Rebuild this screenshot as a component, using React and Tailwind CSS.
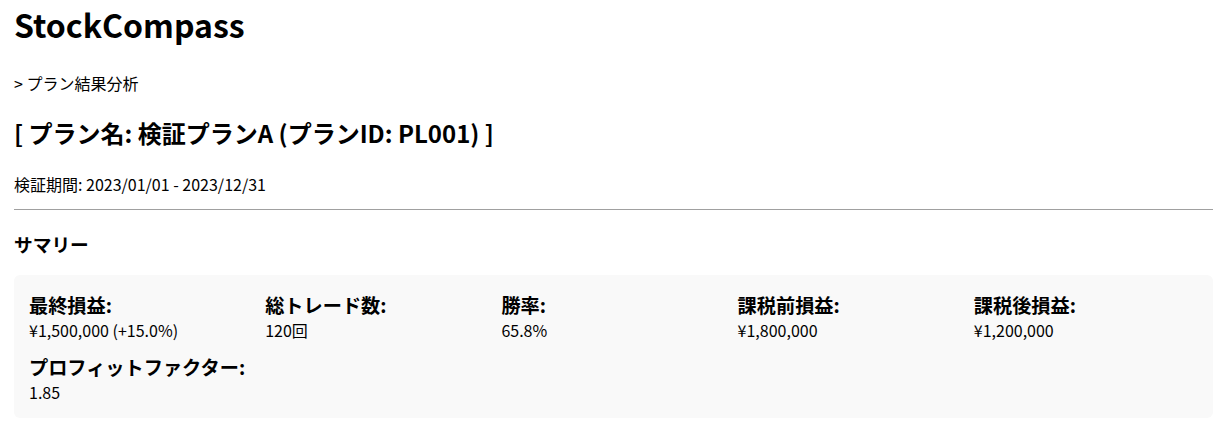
const summary = [
  { label: '最終損益:', value: '¥1,500,000 (+15.0%)' },
  { label: '総トレード数:', value: '120回' },
  { label: '勝率:', value: '65.8%' },
  { label: '課税前損益:', value: '¥1,800,000' },
  { label: '課税後損益:', value: '¥1,200,000' },
  { label: 'プロフィットファクター:', value: '1.85' },
];

export default function App() {
  return (
    <div
      className="min-h-screen bg-white pl-[14px] pr-[13px] text-black"
      style={{ fontFamily: '"Noto Sans CJK JP", "Noto Sans", sans-serif' }}
    >
      <h1 className="pt-[4px] text-[32px] font-bold leading-[40px]">StockCompass</h1>

      <p className="mt-[27px] text-[16px] leading-[24px]">&gt; プラン結果分析</p>

      <h2 className="mt-[22px] text-[24px] font-bold leading-[32px]">
        [ プラン名: 検証プランA (プランID: PL001) ]
      </h2>

      <p className="mt-[23px] text-[16px] leading-[24px]">検証期間: 2023/01/01 - 2023/12/31</p>

      <hr className="mt-[13px] border-t border-[#a0a0a0]" />

      {/* Summary */}
      <h3 className="mt-[21px] text-[18.72px] font-bold leading-[26px]">サマリー</h3>

      <div className="mt-[18px] grid grid-cols-5 gap-[12px] rounded-[6px] bg-[#f9f9f9] px-[15px] pt-[15px] pb-[16px]">
        {summary.map((item) => (
          <div key={item.label} className="flex flex-col">
            <span className="text-[19.2px] font-bold leading-[30px]">{item.label}</span>
            <span className="text-[16px] leading-[20px]">{item.value}</span>
          </div>
        ))}
      </div>
    </div>
  );
}
